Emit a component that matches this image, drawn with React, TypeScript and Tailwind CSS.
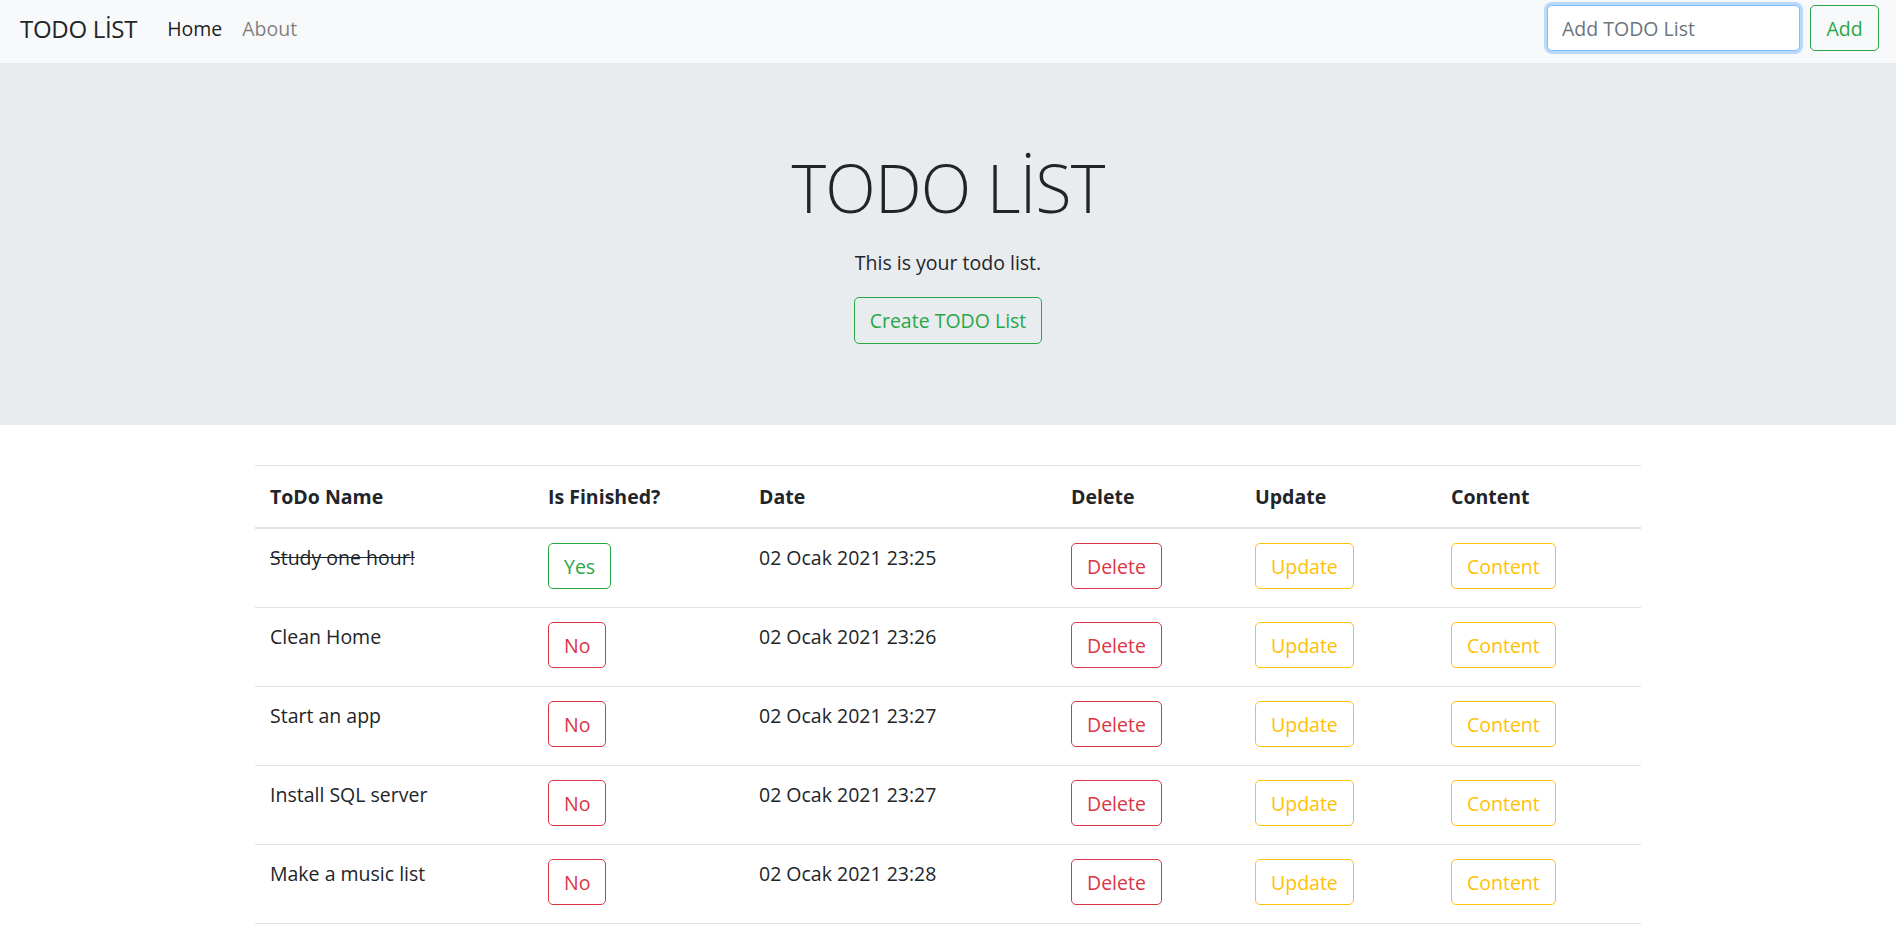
import React from 'react';

const todos = [
  { name: 'Study one hour!', done: true, date: '02 Ocak 2021 23:25' },
  { name: 'Clean Home', done: false, date: '02 Ocak 2021 23:26' },
  { name: 'Start an app', done: false, date: '02 Ocak 2021 23:27' },
  { name: 'Install SQL server', done: false, date: '02 Ocak 2021 23:27' },
  { name: 'Make a music list', done: false, date: '02 Ocak 2021 23:28' },
];

const btn = 'inline-block h-[46px] px-[15px] rounded-[5px] border bg-transparent text-[19.5px] leading-[29px] whitespace-nowrap align-top';

const cell = 'px-[15px] pt-[14px] pb-[18px] align-top';

export default function App() {
  return (
    <div className="min-h-screen bg-white text-[#212529] font-['Open_Sans','Noto_Sans',sans-serif] text-[19.5px] leading-[29px]">
      {/* Navbar */}
      <nav className="h-[63px] bg-[#f8f9fa] flex items-start pt-[5px] pl-[20px] pr-[17px]">
        <div className="h-[47px] flex items-center">
          <span className="text-[24px] text-[#212529] mr-[20px] tracking-[-0.3px]">TODO LİST</span>
          <a className="px-[10px] text-[rgba(0,0,0,0.9)]">Home</a>
          <a className="px-[10px] text-[rgba(0,0,0,0.5)]">About</a>
        </div>
        <div className="ml-auto flex items-center">
          <input
            placeholder="Add TODO List"
            className="w-[253px] h-[46px] px-[14px] rounded-[5px] border border-[#80bdff] bg-white outline-none shadow-[0_0_0_3px_rgba(0,123,255,0.25)] placeholder:text-[#6c757d] text-[19.5px]"
          />
          <button className={`${btn} ml-[10px] w-[69px] px-0 border-[#28a745] text-[#28a745]`}>Add</button>
        </div>
      </nav>

      {/* Jumbotron */}
      <section className="bg-[#e9ecef] pt-[84px] pb-[81px] flex flex-col items-center">
        <h1 className="text-[66px] leading-[80px] font-light tracking-[-0.8px]">TODO LİST</h1>
        <p className="mt-[21px] text-[19.5px] leading-[29px]">This is your todo list.</p>
        <button className={`${btn} !h-[47px] mt-[20px] border-[#28a745] text-[#28a745]`}>Create TODO List</button>
      </section>

      {/* Table */}
      <div className="w-[1386px] mx-auto mt-[40px]">
        <table className="w-full table-fixed border-collapse">
          <colgroup>
            <col className="w-[278px]" />
            <col className="w-[211px]" />
            <col className="w-[312px]" />
            <col className="w-[184px]" />
            <col className="w-[196px]" />
            <col className="w-[205px]" />
          </colgroup>
          <thead>
            <tr className="border-t border-[#dee2e6] border-b-2">
              {['ToDo Name', 'Is Finished?', 'Date', 'Delete', 'Update', 'Content'].map((h) => (
                <th key={h} className="text-left font-bold px-[15px] py-[16px] align-bottom">{h}</th>
              ))}
            </tr>
          </thead>
          <tbody>
            {todos.map((t) => (
              <tr key={t.name} className="border-b border-[#dee2e6]">
                <td className={cell}>
                  <span className={t.done ? 'line-through' : ''}>{t.name}</span>
                </td>
                <td className={cell}>
                  {t.done ? (
                    <button className={`${btn} border-[#28a745] text-[#28a745]`}>Yes</button>
                  ) : (
                    <button className={`${btn} border-[#dc3545] text-[#dc3545]`}>No</button>
                  )}
                </td>
                <td className={cell}>{t.date}</td>
                <td className={cell}>
                  <button className={`${btn} border-[#dc3545] text-[#dc3545]`}>Delete</button>
                </td>
                <td className={cell}>
                  <button className={`${btn} border-[#ffc107] text-[#ffc107]`}>Update</button>
                </td>
                <td className={cell}>
                  <button className={`${btn} border-[#ffc107] text-[#ffc107]`}>Content</button>
                </td>
              </tr>
            ))}
          </tbody>
        </table>
      </div>
    </div>
  );
}
